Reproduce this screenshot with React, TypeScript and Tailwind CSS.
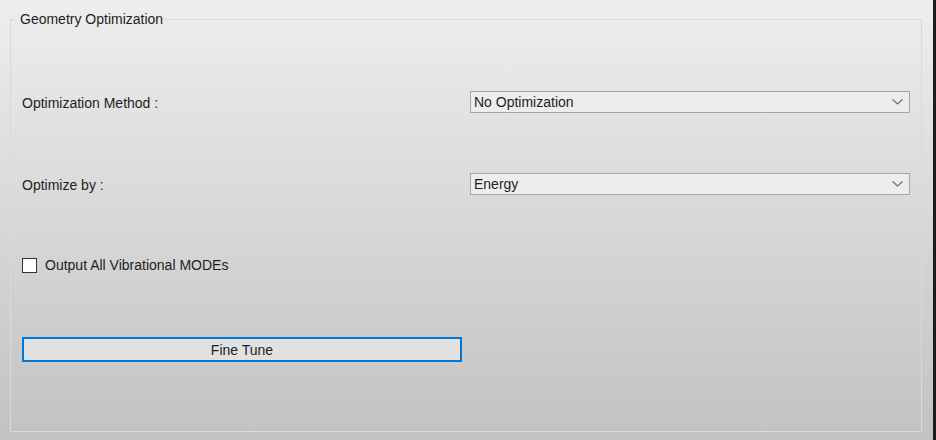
import React from "react";

const font = { fontFamily: '"Liberation Sans", Arial, sans-serif' };

// combo box like the Qt windows style one
function Combo({ value }: { value: string }) {
  return (
    <div className="flex h-[22px] items-center justify-between border border-[#a6a6a6] bg-[#ededed] pl-[3px] pr-[6px]">
      <span className="text-[14px] leading-[16px] text-[#1e1e1e]">{value}</span>
      <svg width="11" height="6" viewBox="0 0 11 6" className="shrink-0">
        <polyline points="0.5,0.5 5.5,5 10.5,0.5" fill="none" stroke="#6a6a6a" strokeWidth="1.1" />
      </svg>
    </div>
  );
}

export default function App() {
  return (
    <div className="flex h-[440px] w-[936px] overflow-hidden" style={font}>
      <div className="flex flex-1 flex-col bg-gradient-to-b from-[#eeeeee] to-[#c2c2c2] pb-[8px] pl-[10px] pr-[11px] pt-[11px]">
        <fieldset className="m-0 flex min-w-0 flex-1 flex-col border border-[#d9d9d9] p-0">
          <legend className="ml-[4px] pl-[5px] pr-[1px] text-[14px] leading-[16px] text-[#1e1e1e]">
            Geometry Optimization
          </legend>

          <div className="grid grid-cols-[440px_440px] items-center gap-x-[8px] px-[11px] pt-[64px]">
            {/* method */}
            <span className="pt-[1px] text-[14px] leading-[16px] text-[#1e1e1e]">Optimization Method :</span>
            <Combo value="No Optimization" />

            {/* optimize by */}
            <span className="mt-[60px] pt-[1px] text-[14px] leading-[16px] text-[#1e1e1e]">Optimize by :</span>
            <div className="mt-[60px]">
              <Combo value="Energy" />
            </div>

            {/* vibrational modes */}
            <label className="mt-[62px] flex items-center gap-[8px]">
              <span className="h-[15px] w-[15px] shrink-0 border border-[#333333] bg-white" />
              <span className="text-[14px] leading-[16px] text-[#1e1e1e]">Output All Vibrational MODEs</span>
            </label>
            <div />

            {/* button */}
            <button className="mt-[64px] h-[25px] w-full border-2 border-[#0078d7] bg-[#e1e1e1] text-[14px] leading-[16px] text-[#1e1e1e]">
              Fine Tune
            </button>
            <div />
          </div>
        </fieldset>
      </div>
      <div className="w-[3px] bg-[#1c1c1c]" />
    </div>
  );
}
